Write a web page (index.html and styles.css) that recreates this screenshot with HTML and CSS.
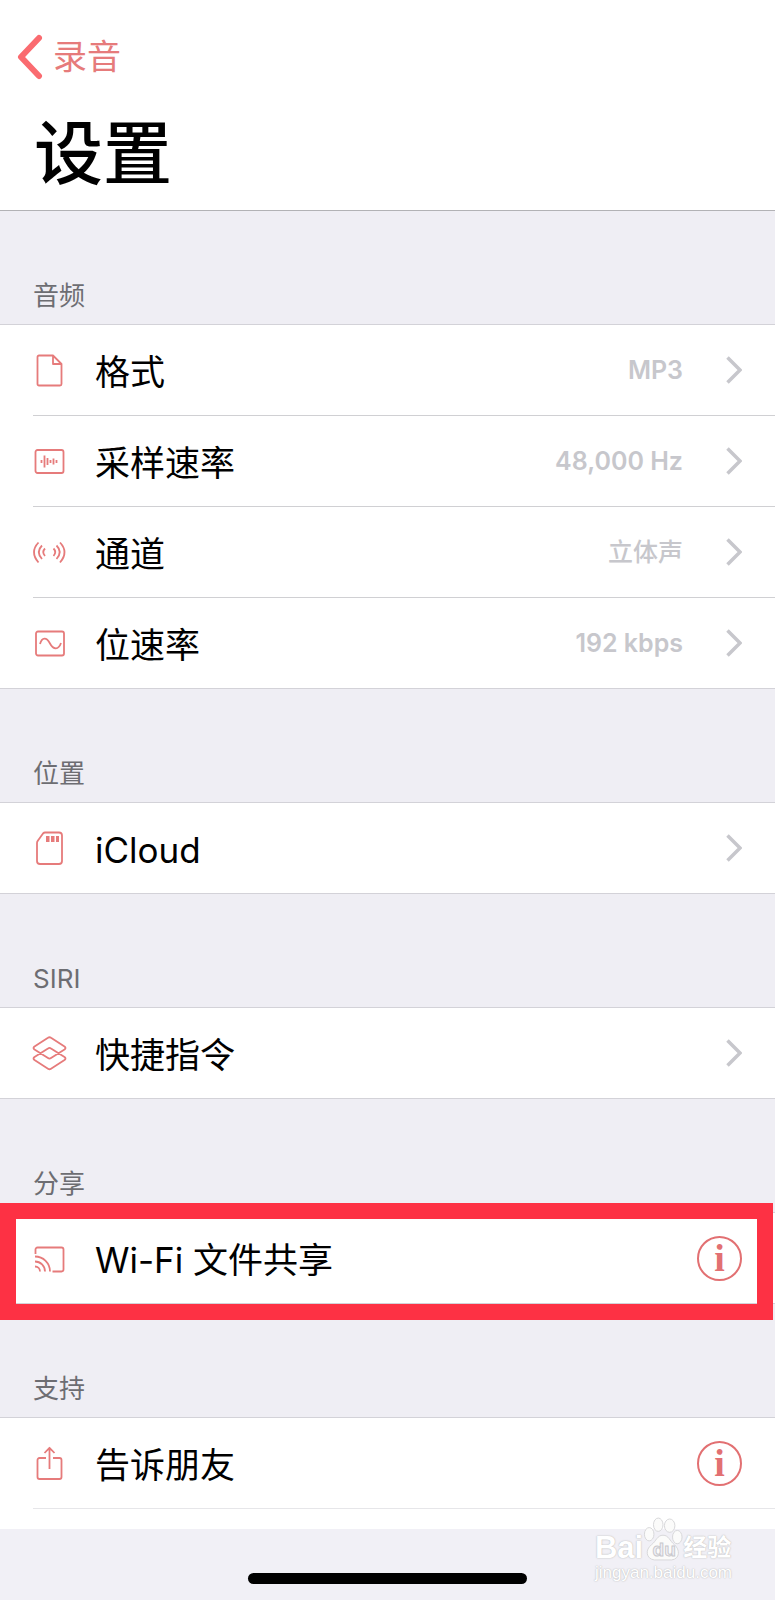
FILE: index.html
```html
<!DOCTYPE html>
<html lang="zh-CN">
<head>
  <meta charset="UTF-8">
  <title>设置</title>
  <meta name="viewport" content="width=device-width, initial-scale=1.0">
  <link rel="stylesheet" href="styles.css">
</head>
<body>
  <header class="navbar">
    <a class="back" href="#">
      <svg class="back-icon" width="26" height="46" viewBox="0 0 26 46"><path d="M22 4 L4 23 L22 42"/></svg>
      录音
    </a>
    <h1>设置</h1>
  </header>

  <main>
    <!-- 音频 -->
    <section>
      <h2>音频</h2>
      <ul class="list">
        <li>
          <a class="row" href="#">
            <svg class="icon" viewBox="0 0 34 34"><path d="M6 2.5H20L28.5 11V31a1.5 1.5 0 0 1-1.5 1.5H6A1.5 1.5 0 0 1 4.5 31V4A1.5 1.5 0 0 1 6 2.5M20 2.5V11H28.5"/></svg>
            <span class="label">格式</span>
            <span class="value">MP3</span>
            <svg class="chevron" viewBox="0 0 16 28"><path d="M1.5 1.5L14 14L1.5 26.5"/></svg>
          </a>
        </li>
        <li>
          <a class="row" href="#">
            <svg class="icon" viewBox="0 0 34 34"><rect x="2.5" y="6" width="28" height="23" rx="2"/><path d="M8.5 16v3M11.5 11.5v12M14.5 14v7M17.5 16v3M20.5 14.5v6M23.5 16v3"/></svg>
            <span class="label">采样速率</span>
            <span class="value">48,000 Hz</span>
            <svg class="chevron" viewBox="0 0 16 28"><path d="M1.5 1.5L14 14L1.5 26.5"/></svg>
          </a>
        </li>
        <li>
          <a class="row" href="#">
            <svg class="icon" viewBox="0 0 34 34"><path d="M5.5 7.5Q-3.5 17 5.5 27.5M9 10.5Q2.5 17 9 24M12 13.5Q8.5 17 12 21M27 7.5Q36 17 27 27.5M23.5 10.5Q30 17 23.5 24M20.5 13.5Q24 17 20.5 21"/></svg>
            <span class="label">通道</span>
            <span class="value value-zh">立体声</span>
            <svg class="chevron" viewBox="0 0 16 28"><path d="M1.5 1.5L14 14L1.5 26.5"/></svg>
          </a>
        </li>
        <li>
          <a class="row" href="#">
            <svg class="icon" viewBox="0 0 34 34"><rect x="3" y="5.5" width="28" height="24" rx="2"/><path d="M7 18C9 11 13.5 11 17 17.5S25.5 24 28 17"/></svg>
            <span class="label">位速率</span>
            <span class="value">192 kbps</span>
            <svg class="chevron" viewBox="0 0 16 28"><path d="M1.5 1.5L14 14L1.5 26.5"/></svg>
          </a>
        </li>
      </ul>
    </section>

    <!-- 位置 -->
    <section>
      <h2>位置</h2>
      <ul class="list">
        <li>
          <a class="row" href="#">
            <svg class="icon" viewBox="0 0 34 34"><path d="M12 1.5H26a3 3 0 0 1 3 3V30a3 3 0 0 1-3 3H7a3 3 0 0 1-3-3V12Q4 10.5 5 9.5L10 2.5Q11 1.5 12 1.5Z"/><path class="solid" d="M13 5h3.5v6H13zM18 5h3.5v6H18zM23 5h3v6h-3z"/></svg>
            <span class="label">iCloud</span>
            <svg class="chevron" viewBox="0 0 16 28"><path d="M1.5 1.5L14 14L1.5 26.5"/></svg>
          </a>
        </li>
      </ul>
    </section>

    <section>
      <h2>SIRI</h2>
      <ul class="list">
        <li>
          <a class="row" href="#">
            <svg class="icon" viewBox="0 0 34 34"><path d="M15 1.8Q16.5 .6 18 1.8L31.5 10.5Q33.5 12 31.5 13.5L18 22Q16.500 23.2 15 22L1.5 13.5Q-.5 12 1.5 10.5ZM15 12.5Q16.5 11.3 18 12.5L31.5 21Q33.5 22.5 31.5 24L18 32.7Q16.5 33.9 15 32.7L1.5 24Q-.5 22.5 1.5 21Z"/></svg>
            <span class="label">快捷指令</span>
            <svg class="chevron" viewBox="0 0 16 28"><path d="M1.5 1.5L14 14L1.5 26.5"/></svg>
          </a>
        </li>
      </ul>
    </section>

    <!-- 分享 -->
    <section>
      <h2>分享</h2>
      <ul class="list">
        <li class="marked">
          <div class="row">
            <svg class="icon" viewBox="0 0 34 34"><path d="M2.5 13V8.5a2 2 0 0 1 2-2H28.5a2 2 0 0 1 2 2V28.5a2 2 0 0 1-2 2H19.5M2 15.5A15 15 0 0 1 17 30.5M2 20.5A10 10 0 0 1 12 30.5M2 25.5A5 5 0 0 1 7 30.5"/></svg>
            <span class="label">Wi-Fi 文件共享</span>
            <button class="info" type="button" aria-label="Wi-Fi 文件共享">i</button>
          </div>
        </li>
      </ul>
    </section>

    <!-- 支持 -->
    <section>
      <h2>支持</h2>
      <ul class="list list-more">
        <li>
          <div class="row">
            <svg class="icon" viewBox="0 0 34 34"><path d="M13 12H6.5a2 2 0 0 0-2 2V31a2 2 0 0 0 2 2H26.5a2 2 0 0 0 2-2V14a2 2 0 0 0-2-2H20M16.5 23V2M11.5 7L16.5 1.8L21.5 7"/></svg>
            <span class="label">告诉朋友</span>
            <button class="info" type="button" aria-label="告诉朋友">i</button>
          </div>
        </li>
      </ul>
    </section>
  </main>

  <footer class="bottom">
    <div class="home-bar"></div>
    <div class="watermark">
      <div class="mark-top">
        <span class="mark-bai">Bai</span>
        <svg class="paw" width="40" height="46" viewBox="0 0 42 46">
          <ellipse cx="6.5" cy="18" rx="5" ry="7"/>
          <ellipse cx="16" cy="8" rx="5" ry="7"/>
          <ellipse cx="28" cy="9" rx="5.5" ry="7"/>
          <ellipse cx="36" cy="21" rx="5" ry="7"/>
          <path d="M21 19C27 19 28 25 33 29C39 34 39 44 30 45H12C3 44 2 34 9 29C14 25 15 19 21 19Z"/>
          <text x="10" y="41">du</text>
        </svg>
        <span class="mark-jy">经验</span>
      </div>
      <div class="mark-url">jingyan.baidu.com</div>
    </div>
  </footer>
</body>
</html>
```
FILE: styles.css
```css
body {
  margin: 0;
  background: #efeef4;
  color: #000;
  font-family: Inter, "Noto Sans CJK SC", sans-serif;
}

h1, h2, ul {
  margin: 0;
  padding: 0;
}

a {
  color: inherit;
  text-decoration: none;
}

/* Header */
.navbar {
  background: #fff;
  border-bottom: 1px solid #b2b2b5;
  padding: 34px 33px 8px 17px;
}

.back {
  display: flex;
  align-items: center;
  gap: 10px;
  height: 46px;
  color: #e67b7b;
  font-size: 34px;
  line-height: 48px;
}

.back-icon path {
  fill: none;
  stroke: #fa6b70;
  stroke-width: 6;
  stroke-linecap: round;
  stroke-linejoin: round;
}

h1 {
  margin-top: 26px;
  padding-left: 17px;
  font-size: 69px;
  line-height: 96px;
  font-weight: 500;
}

/* Groups */
h2 {
  box-sizing: border-box;
  height: 114px;
  padding: 65px 33px 8px;
  border-bottom: 1px solid #d3d2d8;
  color: #6d6d72;
  font-size: 26px;
  line-height: 40px;
  font-weight: 400;
}

.list {
  list-style: none;
  background: #fff;
}

.list li {
  position: relative;
}

.row {
  display: flex;
  align-items: center;
  height: 90px;
  margin-left: 33px;
  padding-right: 33px;
  border-bottom: 1px solid #d0d0d3;
}

.list li:last-child {
  border-bottom: 1px solid #d3d2d8;
}

.list li:last-child .row {
  border-bottom: none;
}

/* The next row starts under the bottom bar */
.list-more {
  padding-bottom: 20px;
}

.list-more li:last-child {
  border-bottom: none;
}

.list-more li:last-child .row {
  border-bottom: 1px solid #e6e6e9;
}

.icon {
  flex: none;
  width: 34px;
  height: 34px;
  overflow: visible;
  fill: none;
  stroke: #e67b7b;
  stroke-width: 1.8;
  stroke-linejoin: round;
}

.icon .solid {
  fill: #e67b7b;
  stroke: none;
}

.label {
  flex: 1;
  margin-left: 28px;
  padding-top: 4px;
  font-size: 35px;
  line-height: 48px;
}

.value {
  color: #c7c7cc;
  font-size: 25px;
  line-height: 36px;
  font-weight: 600;
}

.value-zh {
  font-weight: 500;
}

.chevron {
  flex: none;
  width: 16px;
  height: 28px;
  margin-left: 43px;
  fill: none;
  stroke: #c7c7cc;
  stroke-width: 3.5;
}

.info {
  box-sizing: border-box;
  width: 45px;
  height: 45px;
  padding: 0;
  border: 2px solid #e27072;
  border-radius: 50%;
  background: none;
  color: #e27072;
  font-family: "Liberation Serif", serif;
  font-size: 38px;
  line-height: 40px;
  font-weight: 700;
}

/* Red frame round the row */
.marked::after {
  content: "";
  position: absolute;
  top: -10px;
  right: 2px;
  bottom: -17px;
  left: 0;
  border: 16px solid #fd3144;
  pointer-events: none;
}

/* Bottom bar */
.bottom {
  position: relative;
  display: flex;
  justify-content: center;
  align-items: flex-end;
  height: 71px;
  background: #f1f0f6;
}

.home-bar {
  width: 36%;
  height: 11px;
  margin-bottom: 16px;
  border-radius: 6px;
  background: #000;
}

.watermark {
  position: absolute;
  right: 43px;
  bottom: 16px;
  color: #fff;
  font-family: "Liberation Sans", "Noto Sans CJK SC", sans-serif;
  text-shadow: 0 0 1px #bbb, 0 0 2px #ccc;
}

.mark-top {
  display: flex;
  align-items: flex-end;
}

.mark-bai {
  font-size: 31px;
  line-height: 28px;
  font-weight: 700;
}

.mark-jy {
  font-size: 24px;
  line-height: 28px;
  font-weight: 700;
}

.paw {
  fill: #fbfbfa;
  stroke: #d6d6d8;
  stroke-width: 1;
}

.paw text {
  font-size: 20px;
  font-weight: 700;
  fill: #f1f0f6;
  stroke: #c8c8cc;
  text-shadow: none;
}

.mark-url {
  font-size: 17px;
  line-height: 22px;
}
```
